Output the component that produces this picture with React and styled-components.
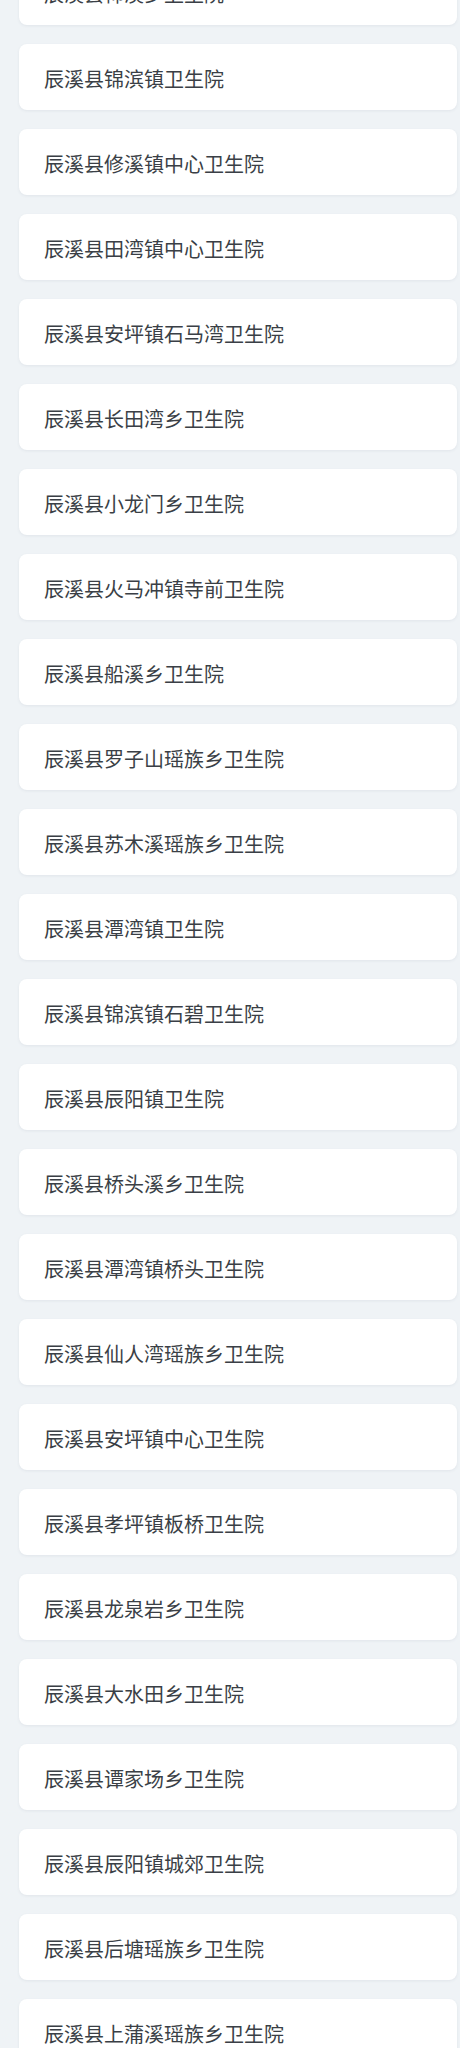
import React from 'react'
import styled, { createGlobalStyle } from 'styled-components'

const hospitals = [
  '辰溪县柿溪乡卫生院',
  '辰溪县锦滨镇卫生院',
  '辰溪县修溪镇中心卫生院',
  '辰溪县田湾镇中心卫生院',
  '辰溪县安坪镇石马湾卫生院',
  '辰溪县长田湾乡卫生院',
  '辰溪县小龙门乡卫生院',
  '辰溪县火马冲镇寺前卫生院',
  '辰溪县船溪乡卫生院',
  '辰溪县罗子山瑶族乡卫生院',
  '辰溪县苏木溪瑶族乡卫生院',
  '辰溪县潭湾镇卫生院',
  '辰溪县锦滨镇石碧卫生院',
  '辰溪县辰阳镇卫生院',
  '辰溪县桥头溪乡卫生院',
  '辰溪县潭湾镇桥头卫生院',
  '辰溪县仙人湾瑶族乡卫生院',
  '辰溪县安坪镇中心卫生院',
  '辰溪县孝坪镇板桥卫生院',
  '辰溪县龙泉岩乡卫生院',
  '辰溪县大水田乡卫生院',
  '辰溪县谭家场乡卫生院',
  '辰溪县辰阳镇城郊卫生院',
  '辰溪县后塘瑶族乡卫生院',
  '辰溪县上蒲溪瑶族乡卫生院',
]

const GlobalStyle = createGlobalStyle`
  html, body {
    margin: 0;
    padding: 0;
    background: #eff3f6;
    overflow: hidden;
  }
  body {
    font-family: "Noto Sans CJK SC", "Noto Sans", sans-serif;
  }
`

const Page = styled.div`
  min-height: 2048px;
  background: #eff3f6;
`

const List = styled.ul`
  list-style: none;
  margin: -41px 0 0 0;
  padding: 0 3px 40px 19px;
  display: flex;
  flex-direction: column;
  gap: 19px;
`

const Item = styled.li`
  height: 66px;
  box-sizing: border-box;
  display: flex;
  align-items: center;
  padding: 3px 0 0 25px;
  background: #fff;
  border-radius: 8px;
  box-shadow: 0 1px 3px rgba(60, 80, 100, 0.08);
  color: #3a3f46;
  font-size: 20px;
  line-height: 1;
`

const App = () => {
  return (
    <>
      <GlobalStyle />
      <Page>
        <List>
          {hospitals.map((name) => (
            <Item key={name}>{name}</Item>
          ))}
        </List>
      </Page>
    </>
  )
}

export default App
